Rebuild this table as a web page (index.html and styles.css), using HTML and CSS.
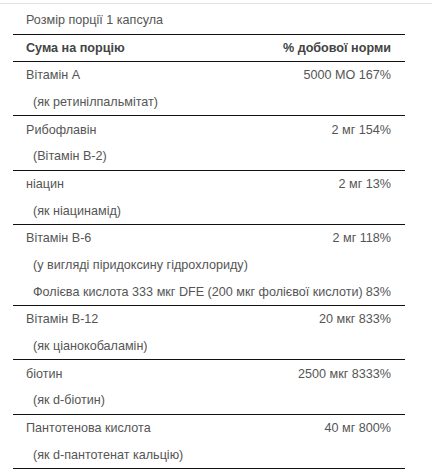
FILE: index.html
```html
<!DOCTYPE html>
<html lang="uk">

<head>
    <meta charset="UTF-8">
    <meta name="viewport" content="width=device-width, initial-scale=1.0">
    <title>Склад</title>
    <link rel="stylesheet" href="styles.css">
</head>

<body>
    <div class="facts">
        <div class="serving">Розмір порції 1 капсула</div>
        <div class="facts-table">
            <div class="group head">
                <div class="row"><span>Сума на порцію</span><span>% добової норми</span></div>
            </div>
            <div class="group">
                <div class="row"><span>Вітамін A</span><span>5000 МО 167%</span></div>
                <div class="row sub"><span>(як ретинілпальмітат)</span></div>
            </div>
            <div class="group">
                <div class="row"><span>Рибофлавін</span><span>2 мг 154%</span></div>
                <div class="row sub"><span>(Вітамін B-2)</span></div>
            </div>
            <div class="group">
                <div class="row"><span>ніацин</span><span>2 мг 13%</span></div>
                <div class="row sub"><span>(як ніацинамід)</span></div>
            </div>
            <div class="group">
                <div class="row"><span>Вітамін B-6</span><span>2 мг 118%</span></div>
                <div class="row sub"><span>(у вигляді піридоксину гідрохлориду)</span></div>
                <div class="row sub"><span>Фолієва кислота 333 мкг DFE (200 мкг фолієвої кислоти)</span><span>83%</span></div>
            </div>
            <div class="group">
                <div class="row"><span>Вітамін B-12</span><span>20 мкг 833%</span></div>
                <div class="row sub"><span>(як ціанокобаламін)</span></div>
            </div>
            <div class="group">
                <div class="row"><span>біотин</span><span>2500 мкг 8333%</span></div>
                <div class="row sub"><span>(як d-біотин)</span></div>
            </div>
            <div class="group">
                <div class="row"><span>Пантотенова кислота</span><span>40 мг 800%</span></div>
                <div class="row sub"><span>(як d-пантотенат кальцію)</span></div>
            </div>
        </div>
    </div>
</body>

</html>
```

FILE: styles.css
```css
body {
    margin: 0;
    padding-top: 3px;
    background: #fff;
    font-family: 'Liberation Sans', Arial, sans-serif;
    font-size: 12.6px;
    color: #555;
}

.facts {
    border-top: 1px solid #e3e3e3;
}

.serving {
    height: 31px;
    line-height: 32px;
    box-sizing: border-box;
    border-bottom: 1px solid #111;
    margin: 0 27px 0 13px;
    padding-left: 13px;
}

.facts-table {
    margin: 0 27px 0 13px;
}

.group {
    border-bottom: 1px solid #111;
}

.row {
    display: flex;
    justify-content: space-between;
    gap: 3px;
    align-items: center;
    height: 26.67px;
    padding: 0 14px 0 13px;
    white-space: nowrap;
}

.head .row {
    height: 26px;
    font-weight: bold;
    color: #444;
}

.sub {
    padding-left: 20px;
}
```
